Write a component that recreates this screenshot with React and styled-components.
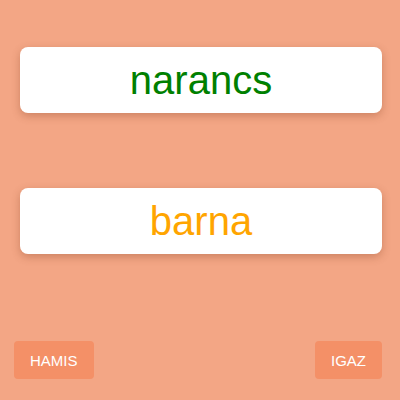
import React from "react";
import styled, { createGlobalStyle } from "styled-components";

const Global = createGlobalStyle`
  html, body { margin: 0; padding: 0; }
  body {
    background: #f3a685;
    font-family: "Liberation Sans", Arial, sans-serif;
  }
`;

const Page = styled.div`
  width: 400px;
  height: 400px;
  box-sizing: border-box;
  display: flex;
  flex-direction: column;
  padding: 47px 18px 21px 14px;
`;

const Cards = styled.div`
  display: flex;
  flex-direction: column;
  gap: 75px;
  padding-left: 6px;
`;

const Card = styled.div`
  height: 66px;
  background: #ffffff;
  border-radius: 8px;
  box-shadow: 0 3px 8px rgba(120, 50, 20, 0.3);
  display: flex;
  align-items: center;
  justify-content: center;
  font-size: 40px;
  color: ${(p) => p.$color};
`;

const Footer = styled.div`
  margin-top: auto;
  display: flex;
  justify-content: space-between;
`;

const Button = styled.button`
  height: 38px;
  padding: 0 16px;
  border: none;
  border-radius: 4px;
  background: #f49067;
  color: #ffffff;
  font-family: "Liberation Sans", Arial, sans-serif;
  font-size: 15px;
  text-transform: uppercase;
  cursor: pointer;
`;

export default function App() {
  return (
    <>
      <Global />
      <Page>
        <Cards>
          <Card $color="#008000">narancs</Card>
          <Card $color="#ffa500">barna</Card>
        </Cards>
        <Footer>
          <Button>Hamis</Button>
          <Button>Igaz</Button>
        </Footer>
      </Page>
    </>
  );
}
